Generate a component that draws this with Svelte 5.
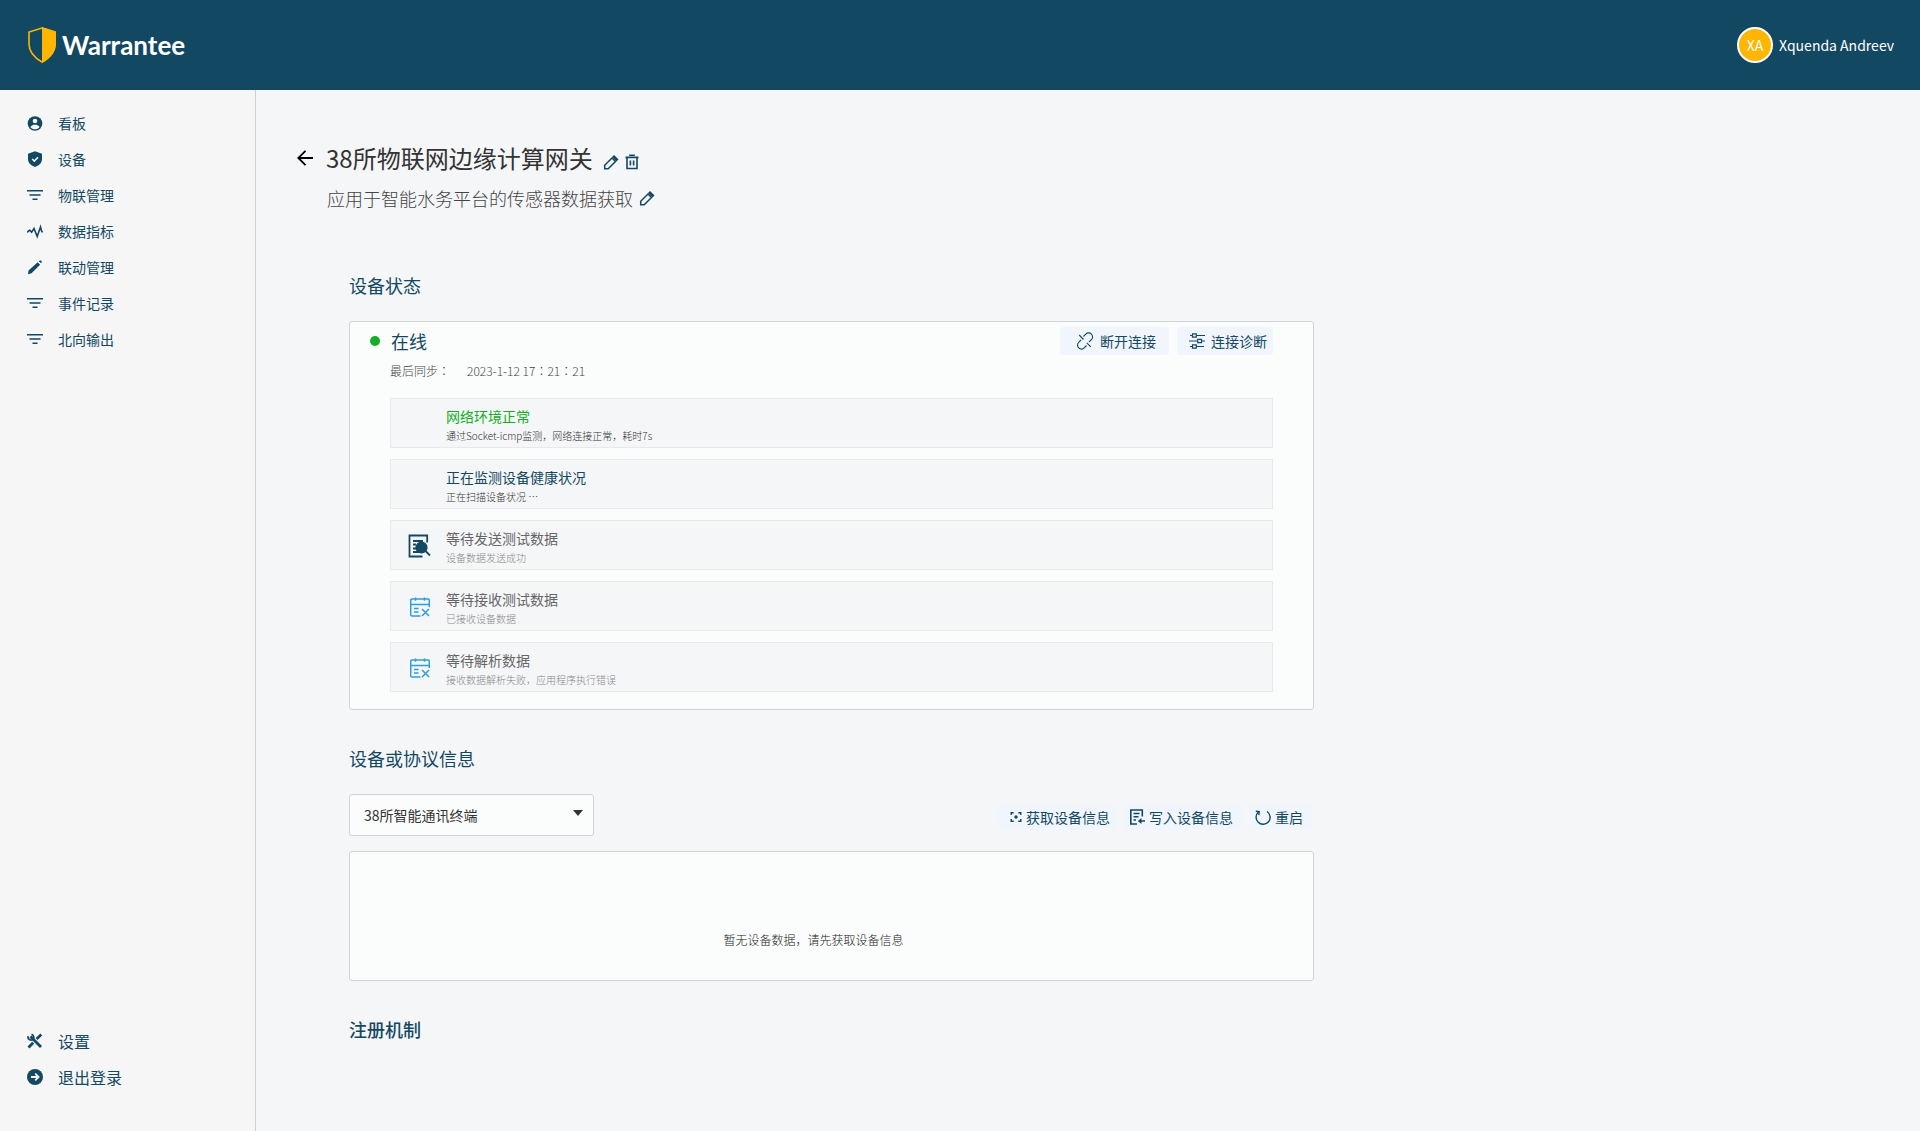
<script>
  const navItems = [
    { label: '看板', icon: 'user' },
    { label: '设备', icon: 'shield' },
    { label: '物联管理', icon: 'filter' },
    { label: '数据指标', icon: 'chart' },
    { label: '联动管理', icon: 'pen' },
    { label: '事件记录', icon: 'filter' },
    { label: '北向输出', icon: 'filter' }
  ];

  const steps = [
    { title: '网络环境正常', text: '通过Socket-icmp监测，网络连接正常，耗时7s', state: 'success', icon: '' },
    { title: '正在监测设备健康状况', text: '正在扫描设备状况 …', state: 'active', icon: '' },
    { title: '等待发送测试数据', text: '设备数据发送成功', state: 'waiting', icon: 'search' },
    { title: '等待接收测试数据', text: '已接收设备数据', state: 'waiting', icon: 'calendar' },
    { title: '等待解析数据', text: '接收数据解析失败，应用程序执行错误', state: 'waiting', icon: 'calendar' }
  ];

  let terminal = '38所智能通讯终端';
</script>

{#snippet editIcon()}
  <svg width="16" height="16" viewBox="0 0 16 16" fill="none" stroke="currentColor" stroke-width="1.500">
    <path d="M1.700 14.800v-3.500L9 4l3.500 3.500-7.300 7.300z" />
    <path d="M10 2l4.500 4.500" stroke-width="3" />
  </svg>
{/snippet}

<div class="page">
  <header class="header">
    <a class="logo" href="/">
      <svg width="28" height="36" viewBox="0 0 28 36">
        <path d="M14 1L27 5v12c0 8-6 14-13 18C7 31 1 25 1 17V5z" fill="none" stroke="#ffb600" stroke-width="1.600" />
        <path d="M14 0l14 4.400V17c0 8.500-6.500 15-14 19z" fill="#ffb600" />
      </svg>
      <span>Warrantee</span>
    </a>
    <div class="user">
      <span class="avatar">XA</span>
      <span>Xquenda Andreev</span>
    </div>
  </header>

  <div class="body">
    <nav class="sidebar">
      <ul>
        {#each navItems as item}
          <li>
            <a href="#{item.label}">
              <svg width="16" height="16" viewBox="0 0 16 16" fill="currentColor">
                {#if item.icon === 'user'}
                  <circle cx="8" cy="8.500" r="7.300" />
                  <circle cx="8" cy="6" r="2.300" fill="#f6f6f6" />
                  <path d="M3.400 11.900C4.500 10.300 6 9.700 8 9.700s3.500.6 4.600 2.200C11.500 13.400 10 14.200 8 14.200S4.500 13.400 3.400 11.900z" fill="#f6f6f6" />
                {:else if item.icon === 'shield'}
                  <path d="M8 .2l7 2.600V8c0 3.500-2.500 6.500-7 8-4.500-1.500-7-4.500-7-8V2.800z" />
                  <path d="M5.200 8l2.100 2.100 3.700-3.900" fill="none" stroke="#f6f6f6" stroke-width="1.500" />
                {:else if item.icon === 'filter'}
                  <path d="M0 3h16v1.600H0zM2.500 7.200h11v1.500h-11zM5.500 11.400h5v1.600h-5z" />
                {:else if item.icon === 'chart'}
                  <path d="M.3 9.500l1-1.500 1.500-.8 1.800 2L7 5.500l3.200 8L13.500 4l1.300 4.600 1 .4" fill="none" stroke="currentColor" stroke-width="1.600" />
                {:else}
                  <path d="M1 15.200l.5-3.700L10.700 3.300l2.400 2.400L4.500 14.300zM11.700 2.500l1-1 1.400.1.900 1.300-1 1.200z" />
                {/if}
              </svg>
              {item.label}
            </a>
          </li>
        {/each}
      </ul>
      <ul class="bottom">
        <li>
          <a href="#settings">
            <svg width="16" height="16" viewBox="0 0 16 16" fill="none" stroke="currentColor">
              <path d="M3.500 3.500L14 14" stroke-width="2.800" />
              <path d="M1.500 14.500L6.200 9.800M9.600 6L14.300 1.600" stroke-width="2.800" />
              <path d="M1.200 3.200A3 3 0 0 0 6 6.400 3.200 3.200 0 0 0 4.500 1.300" stroke-width="1.800" />
            </svg>
            设置
          </a>
        </li>
        <li>
          <a href="#logout">
            <svg width="16" height="16" viewBox="0 0 16 16">
              <circle cx="8" cy="8" r="8" fill="currentColor" />
              <path d="M4 8h7.500M8.200 4.600L11.600 8l-3.400 3.400" fill="none" stroke="#f6f6f6" stroke-width="1.800" />
            </svg>
            退出登录
          </a>
        </li>
      </ul>
    </nav>

    <main class="main">
      <div class="title-row">
        <button class="icon-button back" aria-label="返回">
          <svg width="16" height="16" viewBox="0 0 16 16" fill="none" stroke="#000" stroke-width="1.800">
            <path d="M16 8H1.500M8.500 .8L1.300 8l7.200 7.200" />
          </svg>
        </button>
        <h1>38所物联网边缘计算网关</h1>
        <div class="title-actions">
          <button class="icon-button" aria-label="编辑名称">{@render editIcon()}</button>
          <button class="icon-button" aria-label="删除">
            <svg width="14" height="16" viewBox="0 0 14 16" fill="none" stroke="currentColor" stroke-width="1.600">
              <path d="M.5 3.400h13M4.200 1.300h5.600M2 3.800v10.700h10V3.800M5.400 6.500v5M8.600 6.500v5" />
            </svg>
          </button>
        </div>
      </div>
      <div class="subtitle-row">
        <p>应用于智能水务平台的传感器数据获取</p>
        <button class="icon-button" aria-label="编辑描述">{@render editIcon()}</button>
      </div>

      <div class="content">
        <section>
          <h2>设备状态</h2>
          <div class="card status-card">
            <div class="status-head">
              <span class="dot"></span>
              <h3>在线</h3>
              <button class="action disconnect">
                <svg width="18" height="18" viewBox="0 0 18 18" fill="none" stroke="currentColor" stroke-width="1.100">
                  <path d="M7.500 4.500l2.300-2.300a3.700 3.700 0 0 1 5.600 0 3.800 3.800 0 0 1 0 5.500L13 10M10.500 13.500l-2.200 2.300a3.700 3.700 0 0 1-5.600 0 3.800 3.800 0 0 1 0-5.500L5 8M3.200 3l4.300 4.500M10.800 10.800l4 4" />
                </svg>
                断开连接
              </button>
              <button class="action">
                <svg width="16" height="16" viewBox="0 0 16 16" fill="none" stroke="currentColor" stroke-width="1.200">
                  <path d="M1 2.500h2.500M7.500 2.500H16M0 8h8.500M12.500 8H16M1 13.500h2.500M7.500 13.500H15" />
                  <path d="M3.500 .9h3.800v3.200H3.500zM8.700 6.400h3.800v3.200H8.700zM3.500 11.900h3.800v3.200H3.500z" />
                </svg>
                连接诊断
              </button>
            </div>
            <p class="sync"><span>最后同步：</span><time>2023-1-12 17：21：21</time></p>
            <ul class="steps">
              {#each steps as step}
                <li class="step {step.state}">
                  <div class="step-icon">
                    {#if step.icon === 'search'}
                      <svg width="24" height="24" viewBox="0 0 24 24" fill="none" stroke="#134863" stroke-width="1.800">
                        <path d="M14.500 22.500H1.500V1.500h17.700v7M5 7h10M5 10.500h3M5 14.500h3M5 18h6" />
                        <circle cx="13.500" cy="13.500" r="5.200" fill="#134863" />
                        <path d="M17 16.500l5 5" />
                      </svg>
                    {:else if step.icon === 'calendar'}
                      <svg width="20" height="20" viewBox="0 0 20 20" fill="none" stroke="#2e9fdc" stroke-width="1.500">
                        <path d="M10.500 19H2a1.300 1.300 0 0 1-1.300-1.300V3.300A1.300 1.300 0 0 1 2 2h16a1.300 1.300 0 0 1 1.300 1.300V10" />
                        <path d="M1 7.500h18.500M5.500 .5v3.200M14.500 .5v3.200M4 11.500h4.500M4 15h4.500M12 12l7 7M19 12l-7 7" />
                      </svg>
                    {/if}
                  </div>
                  <div>
                    <h4>{step.title}</h4>
                    <p>{step.text}</p>
                  </div>
                </li>
              {/each}
            </ul>
          </div>
        </section>

        <section>
          <h2>设备或协议信息</h2>
          <div class="toolbar">
            <div class="select">
              <select bind:value={terminal} aria-label="选择终端">
                <option>38所智能通讯终端</option>
              </select>
            </div>
            <div class="tools">
              <button class="tool">
                <svg width="12" height="12" viewBox="0 0 12 12" fill="none" stroke="currentColor" stroke-width="1.400">
                  <path d="M1.200 4V1.700h2.500M8.300 1.700h2.500V4M10.800 8v2.300H8.300M3.700 10.300H1.200V8" />
                  <circle cx="6" cy="6" r="1.700" fill="currentColor" stroke="none" />
                </svg>
                获取设备信息
              </button>
              <button class="tool">
                <svg width="16" height="16" viewBox="0 0 16 16" fill="none" stroke="currentColor" stroke-width="1.600">
                  <path d="M8 15H1.800V1h11.500v6.500M4.500 4.500h6M4.500 7.700h5M4.500 11h2.500M10 12h6" />
                  <path d="M12.500 9v6L8.800 12z" fill="currentColor" stroke="none" />
                </svg>
                写入设备信息
              </button>
              <button class="tool">
                <svg width="16" height="16" viewBox="0 0 16 16" fill="none" stroke="currentColor" stroke-width="1.400">
                  <path d="M12 2.500a7 7 0 1 1-8.500.5" />
                  <path d="M.8 2.300l3.400.3-.4 3.600" />
                </svg>
                重启
              </button>
            </div>
          </div>
          <div class="card empty">暂无设备数据，请先获取设备信息</div>
        </section>

        <section>
          <h2 class="strong">注册机制</h2>
        </section>
      </div>
    </main>
  </div>
</div>

<style>
  :global(body) {
    margin: 0;
    background: #f5f6f8;
  }

  .page {
    display: flex;
    flex-direction: column;
    min-height: 100vh;
    font-family: 'Noto Sans CJK SC', sans-serif;
    font-size: 14px;
    font-weight: 400;
    color: #134863;
  }

  h1,
  h2,
  h3,
  h4,
  p,
  ul {
    margin: 0;
    padding: 0;
    font-weight: inherit;
    list-style: none;
  }

  a {
    color: inherit;
    text-decoration: none;
  }

  svg {
    display: block;
    flex: none;
  }

  button {
    display: flex;
    align-items: center;
    padding: 0;
    border: none;
    background: none;
    font: inherit;
    color: inherit;
    white-space: nowrap;
    cursor: pointer;
  }

  .header {
    display: flex;
    align-items: center;
    justify-content: space-between;
    height: 90px;
    padding: 0 26px 0 28px;
    background: #134863;
    color: #fff;
  }

  .logo {
    display: flex;
    align-items: center;
    gap: 6px;
    font-family: Lato, sans-serif;
    font-size: 26px;
    font-weight: 700;
  }

  .user {
    display: flex;
    align-items: center;
    gap: 6px;
  }

  .avatar {
    display: flex;
    align-items: center;
    justify-content: center;
    box-sizing: border-box;
    width: 36px;
    height: 36px;
    border: 2px solid #fff;
    border-radius: 50%;
    background: #ffb600;
  }

  .body {
    display: flex;
    flex: 1;
  }

  .sidebar {
    display: flex;
    flex-direction: column;
    justify-content: space-between;
    box-sizing: border-box;
    width: 256px;
    padding: 15px 0 36px 27px;
    border-right: 1px solid #cfd0d2;
    background: #f6f6f6;
  }

  .sidebar a {
    display: flex;
    align-items: center;
    gap: 15px;
    height: 36px;
  }

  .bottom {
    font-size: 16px;
  }

  .main {
    flex: 1;
    padding: 50px 41px;
  }

  .title-row,
  .subtitle-row {
    display: flex;
    align-items: center;
  }

  .title-row h1 {
    font-size: 24px;
    line-height: 36px;
    color: #333;
  }

  .back {
    margin-right: 13px;
  }

  .title-actions {
    display: flex;
    gap: 6px;
    padding: 8px 0 0 10px;
  }

  .subtitle-row {
    gap: 6px;
    margin: 8px 0 0 30px;
    font-size: 18px;
    font-weight: 300;
    line-height: 28px;
  }

  .subtitle-row p {
    color: #444;
  }

  .content {
    max-width: 965px;
    margin: 59px 0 0 52px;
  }

  section {
    margin-bottom: 34px;
  }

  h2 {
    margin-bottom: 22px;
    font-size: 18px;
    line-height: 28px;
  }

  h2.strong {
    font-weight: 500;
  }

  .card {
    box-sizing: border-box;
    border: 1px solid #d1d4d6;
    border-radius: 3px;
    background: #fbfdfc;
  }

  .status-card {
    padding: 4px 40px 17px;
  }

  .status-head {
    display: flex;
    align-items: center;
    margin-left: -20px;
    height: 30px;
  }

  .dot {
    width: 10px;
    height: 10px;
    border-radius: 50%;
    background: #13ae26;
  }

  .status-head h3 {
    margin: 0 auto 0 11px;
    font-size: 18px;
    line-height: 28px;
  }

  .action {
    gap: 6px;
    height: 28px;
    padding: 0 6px 0 12px;
    border-radius: 3px;
    background: #f1f6fe;
  }

  .disconnect {
    margin-right: 8px;
    padding: 0 13px 0 16px;
  }

  .sync {
    display: flex;
    gap: 17px;
    margin-top: 5px;
    font-family: 'Noto Sans CJK TC', sans-serif;
    font-size: 12px;
    font-weight: 300;
    line-height: 20px;
    color: #444;
  }

  .steps {
    display: flex;
    flex-direction: column;
    gap: 11px;
    margin-top: 17px;
  }

  .step {
    display: flex;
    box-sizing: border-box;
    height: 50px;
    border: 1px solid #e7e9ea;
    background: #f5f6f8;
  }

  .step-icon {
    display: flex;
    align-items: center;
    justify-content: center;
    width: 55px;
    padding-top: 2px;
    box-sizing: border-box;
  }

  .step-icon svg {
    margin-left: 3px;
  }

  .step h4 {
    margin-top: 6px;
    font-size: 14px;
    line-height: 22px;
  }

  .step p {
    font-size: 10px;
    font-weight: 300;
    line-height: 18px;
    color: #333;
  }

  .success h4 {
    color: #13ae26;
  }

  .waiting h4 {
    color: #666;
  }

  .waiting p {
    color: #888;
  }

  .toolbar {
    display: flex;
    align-items: center;
    justify-content: space-between;
    margin-bottom: 15px;
  }

  .select {
    position: relative;
    width: 245px;
  }

  .select::after {
    content: '';
    position: absolute;
    top: 16px;
    right: 11px;
    border: 5px solid transparent;
    border-top: 6px solid #333;
    border-bottom: 0;
    pointer-events: none;
  }

  select {
    display: block;
    width: 100%;
    height: 42px;
    padding: 0 14px;
    border: 1px solid #d1d4d6;
    border-radius: 3px;
    appearance: none;
    background: #fbfdfc;
    font: inherit;
    color: #333;
  }

  .tools {
    display: flex;
    gap: 8px;
    padding: 4px 2px 0 0;
  }

  .tool {
    gap: 4px;
    height: 26px;
    padding: 0 9px 0 5px;
    border-radius: 3px;
    background: #f1f6fe;
  }

  .tool:first-child {
    padding: 0 6px 0 12px;
  }

  .empty {
    padding: 78px 36px 30px 0;
    font-size: 12px;
    font-weight: 300;
    line-height: 20px;
    text-align: center;
    color: #222;
  }
</style>
